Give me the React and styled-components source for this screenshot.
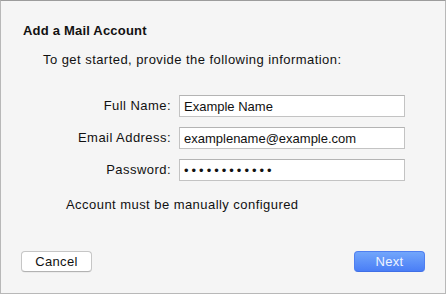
import React from "react";
import styled, { createGlobalStyle } from "styled-components";

const GlobalStyle = createGlobalStyle`
  html, body {
    margin: 0;
    padding: 0;
    background: #f5f5f5;
  }
  * {
    box-sizing: border-box;
  }
`;

const Sheet = styled.div`
  width: 446px;
  height: 294px;
  display: flex;
  flex-direction: column;
  padding: 22px 0 21px 0;
  background: #f5f5f5;
  border: 1px solid #b8b8b8;
  border-top-color: #9c9c9c;
  font-family: "Liberation Sans", Arial, Helvetica, sans-serif;
  font-size: 13px;
  line-height: 16px;
  letter-spacing: 0.45px;
  color: #111;
`;

const Title = styled.h1`
  margin: 0 0 0 22px;
  font-size: 13px;
  line-height: 16px;
  font-weight: 700;
  letter-spacing: 0.2px;
`;

const Intro = styled.p`
  margin: 13px 0 0 42px;
`;

const Form = styled.div`
  margin-top: 27px;
  display: grid;
  grid-template-columns: 170px 226px;
  column-gap: 8px;
  row-gap: 10px;
  align-items: center;
`;

const Label = styled.label`
  text-align: right;
`;

const Field = styled.input`
  height: 22px;
  width: 226px;
  margin: 0;
  padding: 0 4px;
  border: 1px solid #c3c3c3;
  border-top-color: #b4b4b4;
  background: #fff;
  font-family: inherit;
  font-size: 13px;
  color: #111;
  outline: none;
  letter-spacing: ${(p) => (p.type === "password" ? "3px" : "0")};
`;

const Note = styled.p`
  margin: 16px 0 0 65px;
`;

const Footer = styled.div`
  margin-top: auto;
  display: flex;
  justify-content: space-between;
  padding: 0 20px 0 20px;
`;

const Button = styled.button`
  width: 71px;
  height: 21px;
  margin: 0;
  padding: 0;
  border-radius: 4px;
  font-family: inherit;
  font-size: 13px;
  line-height: 19px;
  letter-spacing: 0.3px;
  border: 1px solid ${(p) => (p.primary ? "#4f7ff0" : "#c6c6c6")};
  border-bottom-color: ${(p) => (p.primary ? "#3f6fe6" : "#b2b2b2")};
  background: ${(p) =>
    p.primary ? "linear-gradient(#72a6fb, #4a7ef6)" : "#ffffff"};
  color: ${(p) => (p.primary ? "#eef3ff" : "#111")};
  box-shadow: ${(p) => (p.primary ? "none" : "0 0.5px 0 rgba(0,0,0,0.08)")};
`;

export default function App() {
  return (
    <>
      <GlobalStyle />
      <Sheet>
        <Title>Add a Mail Account</Title>
        <Intro>To get started, provide the following information:</Intro>
        <Form>
          <Label>Full Name:</Label>
          <Field type="text" defaultValue="Example Name" />
          <Label>Email Address:</Label>
          <Field type="text" defaultValue="examplename@example.com" />
          <Label>Password:</Label>
          <Field type="password" defaultValue="examplepass1" />
        </Form>
        <Note>Account must be manually configured</Note>
        <Footer>
          <Button>Cancel</Button>
          <Button primary>Next</Button>
        </Footer>
      </Sheet>
    </>
  );
}
